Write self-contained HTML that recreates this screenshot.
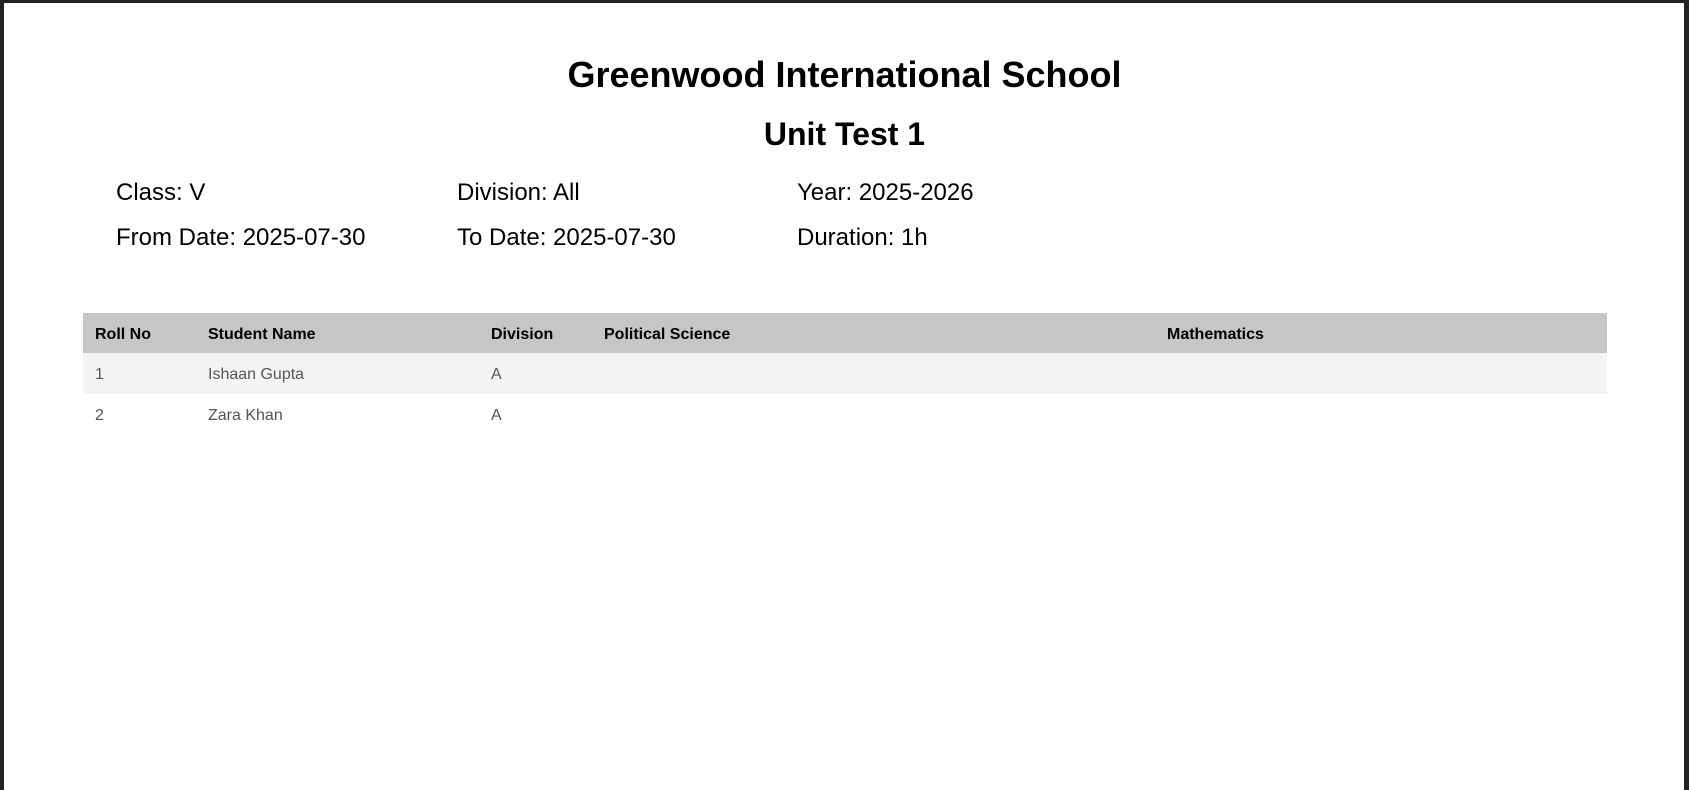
<!DOCTYPE html>
<html><head><meta charset="utf-8"><style>
html,body{margin:0;padding:0;}
body{width:1689px;height:790px;background:#222;overflow:hidden;font-family:"Liberation Sans",Arial,sans-serif;}
.page{position:absolute;left:4px;top:3px;width:1680px;height:787px;background:#fff;}
.t{position:absolute;left:0;width:1689px;text-align:center;font-weight:bold;color:#000;margin:0;}
.info{position:absolute;font-size:24px;color:#000;white-space:nowrap;line-height:24px;}
table{position:absolute;left:83px;top:313px;width:1524px;border-collapse:collapse;table-layout:fixed;font-size:16px;}
td,th{padding:3px 12px 0 12px;text-align:left;height:38px;white-space:nowrap;}
th{background:#c6c6c6;color:#000;font-weight:bold;height:37px;}
td{color:#555;}
tr.a td{background:#f4f4f4;}
</style></head><body>
<div class="page"></div>
<div class="t" style="top:56px;font-size:36px;line-height:38px;">Greenwood International School</div>
<div class="t" style="top:119px;font-size:32px;line-height:30px;">Unit Test 1</div>
<div class="info" style="left:116px;top:181px">Class: V</div>
<div class="info" style="left:457px;top:181px">Division: All</div>
<div class="info" style="left:797px;top:181px">Year: 2025-2026</div>
<div class="info" style="left:116px;top:226px">From Date: 2025-07-30</div>
<div class="info" style="left:457px;top:226px">To Date: 2025-07-30</div>
<div class="info" style="left:797px;top:226px">Duration: 1h</div>
<table>
<colgroup><col style="width:113px"><col style="width:283px"><col style="width:113px"><col style="width:563px"><col style="width:452px"></colgroup>
<tr><th>Roll No</th><th>Student Name</th><th>Division</th><th>Political Science</th><th>Mathematics</th></tr>
<tr class="a"><td>1</td><td>Ishaan Gupta</td><td>A</td><td></td><td></td></tr>
<tr><td>2</td><td>Zara Khan</td><td>A</td><td></td><td></td></tr>
</table>
</body></html>
